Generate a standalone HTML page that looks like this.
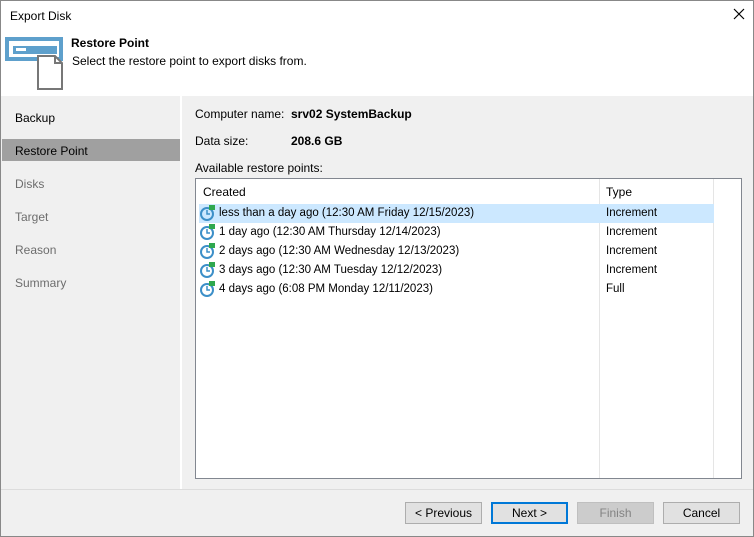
<!DOCTYPE html><html><head><style>
body{margin:0;width:754px;height:537px;overflow:hidden;font-family:"Liberation Sans",sans-serif;font-size:12px;color:#000}
.win{position:absolute;left:0;top:0;width:752px;height:535px;border:1px solid #888;background:#f0f0f0}
.t{position:absolute;white-space:nowrap}
.btn{position:absolute;top:501px;width:75px;height:20px;border:1px solid #adadad;background:#e1e1e1;text-align:center;line-height:20px}
.row{position:absolute;left:3px;width:515px;height:19px;line-height:19px;font-size:11.5px}
</style></head><body><div class="win">
<div style="position:absolute;left:0;top:0;width:752px;height:95px;background:#fff"></div>
<div class="t" style="left:9px;top:8px">Export Disk</div>
<svg style="position:absolute;left:732px;top:7px" width="12" height="12"><path d="M1 1 L11 11 M11 1 L1 11" stroke="#000" stroke-width="1.2"/></svg>
<svg style="position:absolute;left:4px;top:36px" width="60" height="56"><rect x="2" y="2" width="54" height="20" fill="none" stroke="#5ea0cc" stroke-width="4"/><rect x="8" y="9" width="44" height="8" fill="#5ea0cc"/><rect x="11" y="11" width="10" height="3" fill="#fff"/><path d="M33 19 H50 L57 26 V52 H33 Z" fill="#fff" stroke="#777" stroke-width="2"/><path d="M50 19 V26 H57" fill="none" stroke="#777" stroke-width="2"/></svg>
<div class="t" style="left:70px;top:35px;font-weight:bold">Restore Point</div>
<div class="t" style="left:71px;top:53px">Select the restore point to export disks from.</div>
<div style="position:absolute;left:179px;top:95px;width:2px;height:393px;background:#fff"></div>
<div class="t" style="left:14px;top:110px">Backup</div>
<div style="position:absolute;left:1px;top:138px;width:178px;height:22px;background:#a0a0a0"></div>
<div class="t" style="left:14px;top:143px">Restore Point</div>
<div class="t" style="left:14px;top:176px;color:#6d6d6d">Disks</div>
<div class="t" style="left:14px;top:209px;color:#6d6d6d">Target</div>
<div class="t" style="left:14px;top:242px;color:#6d6d6d">Reason</div>
<div class="t" style="left:14px;top:275px;color:#6d6d6d">Summary</div>
<div class="t" style="left:194px;top:106px">Computer name:</div>
<div class="t" style="left:290px;top:106px;font-weight:bold">srv02 SystemBackup</div>
<div class="t" style="left:194px;top:133px">Data size:</div>
<div class="t" style="left:290px;top:133px;font-weight:bold">208.6 GB</div>
<div class="t" style="left:194px;top:160px">Available restore points:</div>
<div style="position:absolute;left:194px;top:177px;width:545px;height:299px;border:1px solid #828790;background:#fff">
<div style="position:absolute;left:403px;top:0;width:1px;height:299px;background:#e5e5e5"></div>
<div style="position:absolute;left:517px;top:0;width:1px;height:299px;background:#e5e5e5"></div>
<div class="t" style="left:7px;top:6px">Created</div>
<div class="t" style="left:410px;top:6px">Type</div>
<div class="row" style="top:25px;background:#cce8ff"></div>
<div class="row" style="top:25px"><span style="position:absolute;left:20px">less than a day ago (12:30 AM Friday 12/15/2023)</span><span style="position:absolute;left:407px">Increment</span></div>
<div class="row" style="top:44px"><span style="position:absolute;left:20px">1 day ago (12:30 AM Thursday 12/14/2023)</span><span style="position:absolute;left:407px">Increment</span></div>
<div class="row" style="top:63px"><span style="position:absolute;left:20px">2 days ago (12:30 AM Wednesday 12/13/2023)</span><span style="position:absolute;left:407px">Increment</span></div>
<div class="row" style="top:82px"><span style="position:absolute;left:20px">3 days ago (12:30 AM Tuesday 12/12/2023)</span><span style="position:absolute;left:407px">Increment</span></div>
<div class="row" style="top:101px"><span style="position:absolute;left:20px">4 days ago (6:08 PM Monday 12/11/2023)</span><span style="position:absolute;left:407px">Full</span></div>
<svg style="position:absolute;left:4px;top:25px" width="16" height="100">
<g id="c"><circle cx="7" cy="10" r="6" fill="none" stroke="#3c8fc8" stroke-width="2"/><path d="M7 6 V10 H10" fill="none" stroke="#3c8fc8" stroke-width="1.5"/><rect x="9" y="1" width="6" height="5" fill="#2fa84f"/></g>
<use href="#c" y="19"/><use href="#c" y="38"/><use href="#c" y="57"/><use href="#c" y="76"/></svg>
</div>
<div style="position:absolute;left:0;top:488px;width:752px;height:1px;background:#dcdcdc"></div>
<div class="btn" style="left:404px">&lt; Previous</div>
<div class="btn" style="left:490px;border:2px solid #0078d7;width:73px;height:18px;line-height:18px">Next &gt;</div>
<div class="btn" style="left:576px;background:#ccc;border-color:#bfbfbf;color:#838383">Finish</div>
<div class="btn" style="left:662px">Cancel</div>
</div></body></html>
